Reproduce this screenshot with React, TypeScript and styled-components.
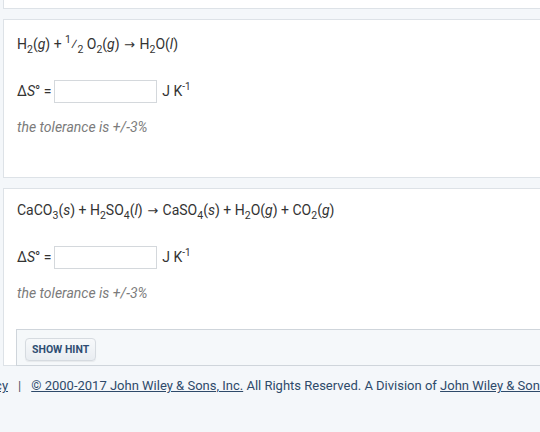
import styled, { createGlobalStyle } from "styled-components";

const GlobalStyle = createGlobalStyle`
  html, body {
    margin: 0;
    padding: 0;
    background: #f4f7fa;
    overflow: hidden;
  }
  body {
    font-family: Roboto, "Liberation Sans", sans-serif;
    color: #333;
  }
`;

const Page = styled.div`
  width: 540px;
  height: 432px;
  overflow: hidden;
  padding-left: 3px;
  box-sizing: border-box;
`;

const Stack = styled.div`
  display: flex;
  flex-direction: column;
  width: 620px;
`;

const Panel = styled.section<{ $gap?: number }>`
  background: #fff;
  border: 1px solid #dde2e7;
  margin-top: ${(p) => p.$gap ?? 0}px;
`;

const PrevPanel = styled(Panel)`
  height: 8px;
  border-top: none;
`;

const Body = styled.div<{ $top: number; $bottom: number }>`
  padding: ${(p) => p.$top}px 13px ${(p) => p.$bottom}px;
`;

const Equation = styled.div`
  font-size: 14px;
  line-height: 20px;
  white-space: nowrap;
  sub {
    font-size: 10.5px;
    vertical-align: -3.5px;
    line-height: 0;
  }
  sup {
    font-size: 10.5px;
    vertical-align: 6px;
    line-height: 0;
  }
  i {
    font-style: italic;
  }
`;

const Arrow = styled.span`
  font-family: "DejaVu Sans", sans-serif;
  font-size: 13px;
  margin: 0 1px;
`;

const AnswerRow = styled.div`
  display: flex;
  align-items: center;
  margin-top: 25px;
  font-size: 14px;
  height: 22px;
`;

const Label = styled.span`
  margin-right: 3px;
  i {
    font-style: italic;
  }
`;

const Input = styled.input`
  width: 103px;
  height: 23px;
  box-sizing: border-box;
  border: 1px solid #d4d8dc;
  border-radius: 0;
  margin: 0 5px 0 0;
  padding: 0 4px;
`;

const Units = styled.span`
  sup {
    font-size: 10px;
    vertical-align: 6px;
    line-height: 0;
  }
`;

const Tolerance = styled.div`
  margin-top: 15px;
  font-size: 14px;
  line-height: 20px;
  font-style: italic;
  color: #7b7b7b;
`;

const HintBox = styled.div`
  margin-left: 12px;
  background: #f5f8fa;
  border: 1px solid #cfd5db;
  border-right: none;
  margin-bottom: -1px;
  padding: 8px 8px 4px;
`;

const HintButton = styled.button`
  display: block;
  font-family: Roboto, "Liberation Sans", sans-serif;
  font-size: 10.5px;
  font-weight: 700;
  color: #2f4d72;
  height: 23px;
  padding: 0 6px;
  border: 1px solid #d6dbe0;
  border-radius: 4px;
  background: linear-gradient(#f7f9fb, #e9edf1);
  box-shadow: 0 1px 1px rgba(0, 0, 0, 0.06);
`;

const Footer = styled.div`
  display: flex;
  align-items: center;
  gap: 10px;
  margin: 10px 0 0 -75px;
  font-size: 13px;
  line-height: 20px;
  color: #2e4a6a;
  white-space: nowrap;
`;

const FooterLink = styled.a`
  color: #2e4a6a;
  text-decoration: underline;
`;

const Sep = styled.span`
  color: #556;
`;

function Answer() {
  return (
    <AnswerRow>
      <Label>
        Δ<i>S</i>° =
      </Label>
      <Input type="text" />
      <Units>
        J K<sup>-1</sup>
      </Units>
    </AnswerRow>
  );
}

export default function App() {
  return (
    <Page>
      <GlobalStyle />
      <Stack>
        <PrevPanel />
        <Panel $gap={10}>
          <Body $top={14} $bottom={40}>
            <Equation>
              H<sub>2</sub>(<i>g</i>) + <sup>1</sup>⁄<sub>2</sub> O<sub>2</sub>(<i>g</i>) <Arrow>→</Arrow> H<sub>2</sub>O(<i>l</i>)
            </Equation>
            <Answer />
            <Tolerance>the tolerance is +/-3%</Tolerance>
          </Body>
        </Panel>
        <Panel $gap={10}>
          <Body $top={11} $bottom={26}>
            <Equation>
              CaCO<sub>3</sub>(<i>s</i>) + H<sub>2</sub>SO<sub>4</sub>(<i>l</i>) <Arrow>→</Arrow> CaSO<sub>4</sub>(<i>s</i>) + H<sub>2</sub>O(<i>g</i>) + CO<sub>2</sub>(<i>g</i>)
            </Equation>
            <Answer />
            <Tolerance>the tolerance is +/-3%</Tolerance>
          </Body>
          <HintBox>
            <HintButton>SHOW HINT</HintButton>
          </HintBox>
        </Panel>
        <Footer>
          <FooterLink>Privacy Policy</FooterLink>
          <Sep>|</Sep>
          <span>
            <FooterLink>© 2000-2017 John Wiley &amp; Sons, Inc.</FooterLink> All Rights Reserved. A Division of{" "}
            <FooterLink>John Wiley &amp; Sons, Inc.</FooterLink>
          </span>
        </Footer>
      </Stack>
    </Page>
  );
}
